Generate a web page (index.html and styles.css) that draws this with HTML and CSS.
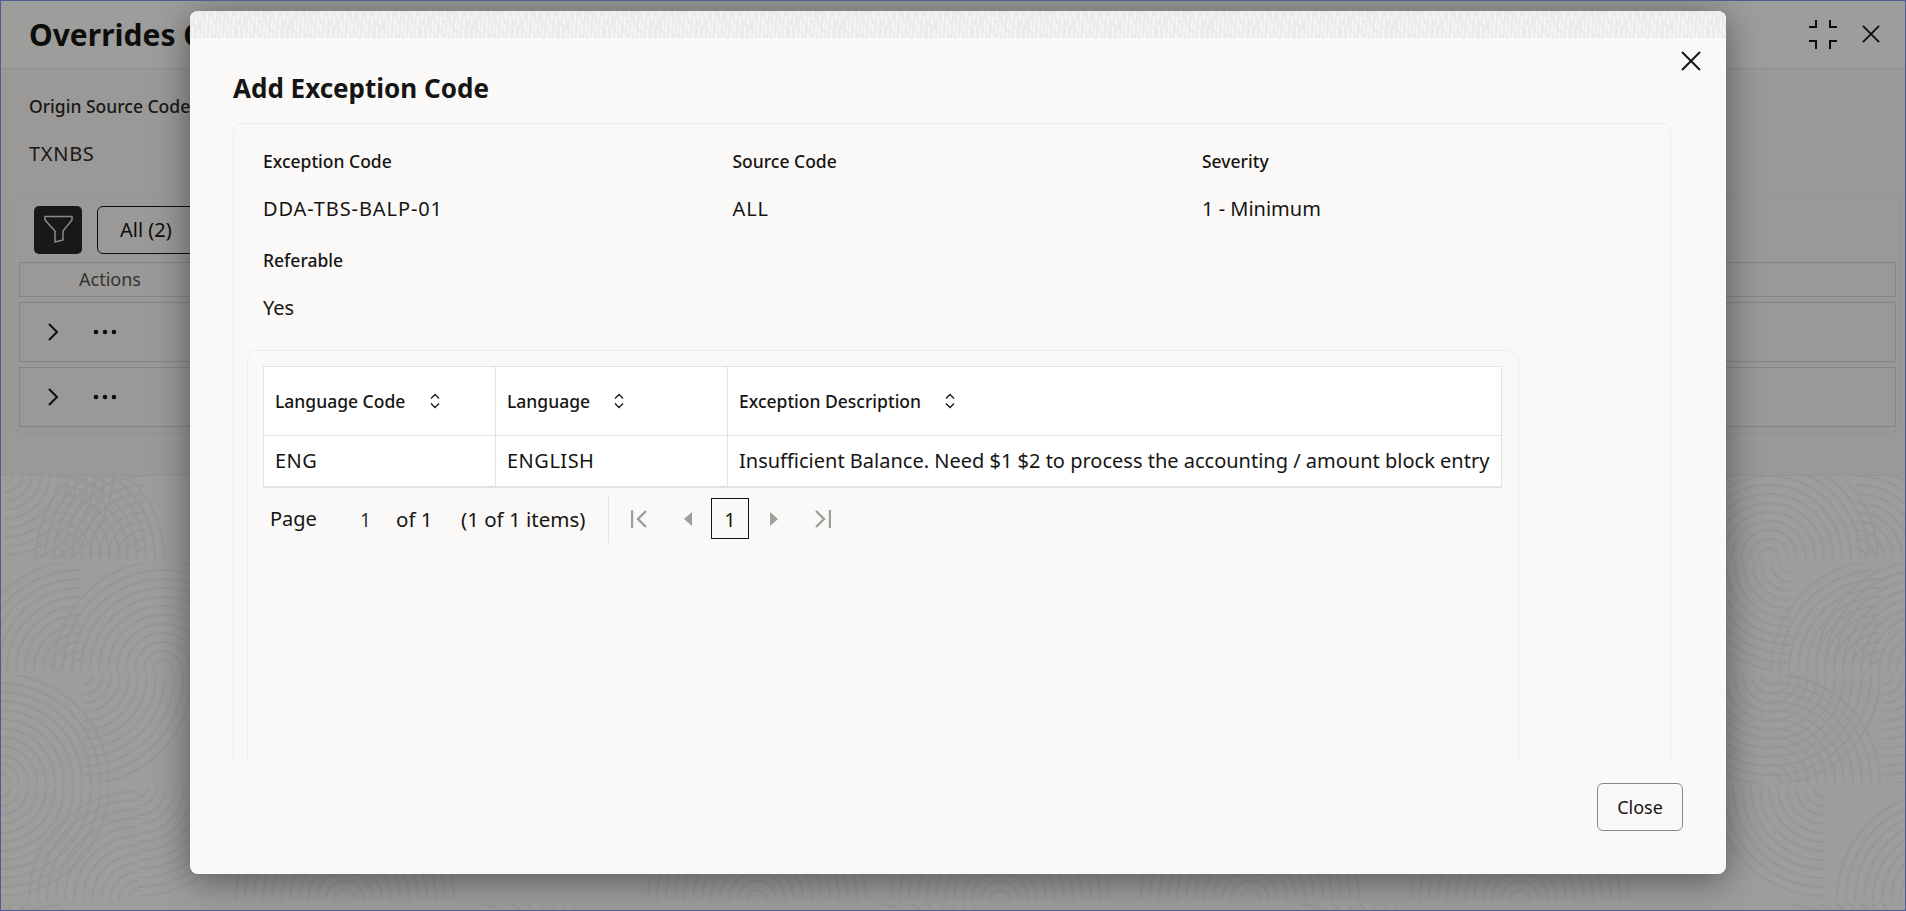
FILE: index.html
```html
<!DOCTYPE html>
<html lang="en">
<head>
<meta charset="utf-8">
<title>Add Exception Code</title>
<link rel="stylesheet" href="styles.css">
</head>
<body>
<div class="window">
  <svg class="texture" viewBox="0 0 1906 911" aria-hidden="true">
    <defs>
      <g id="q">
        <path d="M10 0A10 10 0 0 1 0 10M19 0A19 19 0 0 1 0 19M28 0A28 28 0 0 1 0 28M37 0A37 37 0 0 1 0 37M46 0A46 46 0 0 1 0 46M55 0A55 55 0 0 1 0 55M64 0A64 64 0 0 1 0 64M73 0A73 73 0 0 1 0 73M82 0A82 82 0 0 1 0 82M91 0A91 91 0 0 1 0 91M100 0A100 100 0 0 1 0 100M109 0A109 109 0 0 1 0 109"/>
      </g>
      <clipPath id="r1"><rect x="0" y="476" width="1906" height="83"/></clipPath>
      <clipPath id="r2"><rect x="0" y="563" width="1906" height="108"/></clipPath>
      <clipPath id="r3"><rect x="0" y="675" width="1906" height="108"/></clipPath>
      <clipPath id="r4"><rect x="0" y="787" width="1906" height="114"/></clipPath>
      <clipPath id="r5"><rect x="0" y="904" width="1906" height="7"/></clipPath>
    </defs>
    <g clip-path="url(#r1)">
      <use href="#q" transform="translate(4 473)"/>
      <use href="#q" transform="translate(55 558) rotate(270)"/>
      <use href="#q" transform="translate(145 558) rotate(180)"/>
      <use href="#q" transform="translate(1769 558) rotate(270)"/>
      <use href="#q" transform="translate(1769 558) rotate(180)"/>
      <use href="#q" transform="translate(1856 558) rotate(270)"/>
    </g>
    <g clip-path="url(#r2)">
      <use href="#q" transform="translate(80 670) rotate(180)"/>
      <use href="#q" transform="translate(163 670) rotate(180)"/>
      <use href="#q" transform="translate(163 670) rotate(270)"/>
      <use href="#q" transform="translate(1790 563) rotate(90)"/>
      <use href="#q" transform="translate(1880 670) rotate(180)"/>
      <use href="#q" transform="translate(1925 670) rotate(180)"/>
    </g>
    <g clip-path="url(#r3)">
      <use href="#q" transform="translate(0 783) rotate(270)"/>
      <use href="#q" transform="translate(83 675)"/>
      <use href="#q" transform="translate(1771 675) rotate(90)"/>
      <use href="#q" transform="translate(1771 675)"/>
      <use href="#q" transform="translate(1771 783) rotate(270)"/>
      <use href="#q" transform="translate(1883 675)"/>
    </g>
    <g clip-path="url(#r4)">
      <use href="#q" transform="translate(0 787)"/>
      <use href="#q" transform="translate(138 900) rotate(180)"/>
      <use href="#q" transform="translate(138 787)"/>
      <use href="#q" transform="translate(1824 787) rotate(90)"/>
      <use href="#q" transform="translate(1946 900) rotate(180)"/>
      <use href="#q" transform="translate(345 900) rotate(180)"/>
      <use href="#q" transform="translate(345 900) rotate(270)"/>
      <use href="#q" transform="translate(757 900) rotate(180)"/>
      <use href="#q" transform="translate(757 900) rotate(270)"/>
      <use href="#q" transform="translate(1000 900) rotate(180)"/>
      <use href="#q" transform="translate(1000 900) rotate(270)"/>
      <use href="#q" transform="translate(1250 900) rotate(180)"/>
      <use href="#q" transform="translate(1250 900) rotate(270)"/>
      <use href="#q" transform="translate(1520 900) rotate(180)"/>
      <use href="#q" transform="translate(1520 900) rotate(270)"/>
    </g>
    <g clip-path="url(#r5)">
      <use href="#q" transform="translate(60 960) rotate(180)"/>
      <use href="#q" transform="translate(480 960) rotate(270)"/>
      <use href="#q" transform="translate(880 960) rotate(270)"/>
      <use href="#q" transform="translate(1300 960) rotate(270)"/>
      <use href="#q" transform="translate(1790 960) rotate(270)"/>
    </g>
  </svg>

  <header class="page-head">
    <h1 class="page-title">Overrides Code</h1>
    <div class="head-tools">
      <svg class="icon-collapse" viewBox="0 0 30 30" aria-hidden="true"><path d="M1 8H8V1M22 1V8H29M1 22H8V30M29 22H22V30"/></svg>
      <svg class="icon-x" viewBox="0 0 20 20" aria-hidden="true"><path d="M1 1L19 19M19 1L1 19"/></svg>
    </div>
  </header>

  <main class="page-main">
    <div class="origin">
      <div class="origin-label">Origin Source Code</div>
      <div class="origin-value">TXNBS</div>
    </div>
    <section class="list">
      <div class="list-tools">
        <button class="filter-btn" aria-label="Filter">
          <svg viewBox="0 0 48 48" aria-hidden="true"><path d="M11 10.500H38V14L29 25V34L21 36V25L11 14Z"/></svg>
        </button>
        <button class="all-btn">All (2)</button>
      </div>
      <div class="list-head"><span>Actions</span></div>
      <div class="list-row">
        <svg class="chev" viewBox="0 0 12 20" aria-hidden="true"><path d="M2 2L10 10L2 18"/></svg>
        <svg class="dots" viewBox="0 0 24 6" aria-hidden="true"><circle cx="3" cy="3" r="2.300"/><circle cx="12" cy="3" r="2.300"/><circle cx="21" cy="3" r="2.300"/></svg>
      </div>
      <div class="list-row">
        <svg class="chev" viewBox="0 0 12 20" aria-hidden="true"><path d="M2 2L10 10L2 18"/></svg>
        <svg class="dots" viewBox="0 0 24 6" aria-hidden="true"><circle cx="3" cy="3" r="2.300"/><circle cx="12" cy="3" r="2.300"/><circle cx="21" cy="3" r="2.300"/></svg>
      </div>
    </section>
  </main>

  <div class="overlay"></div>

  <div class="dialog" role="dialog" aria-label="Add Exception Code">
    <svg class="dialog-band" aria-hidden="true">
      <defs>
        <pattern id="band" width="46" height="27" patternUnits="userSpaceOnUse">
          <path d="M2 1v9M6 4v11M10 0v7M13 8v12M17 2v10M21 6v13M25 1v8M28 11v11M32 3v9M36 7v12M40 0v10M44 5v11M3 15v11M8 18v8M12 22v5M16 14v10M20 21v6M24 12v11M27 24v3M31 15v10M35 21v6M39 13v11M43 18v9" />
        </pattern>
      </defs>
      <rect width="100%" height="100%" fill="url(#band)"/>
    </svg>
    <button class="dialog-x" aria-label="Close">
      <svg viewBox="0 0 20 20" aria-hidden="true"><path d="M1 1L19 19M19 1L1 19"/></svg>
    </button>
    <h2 class="dialog-title">Add Exception Code</h2>
    <div class="dialog-scroll">
      <section class="panel">
        <div class="fields">
          <div class="field"><div class="field-label">Exception Code</div><div class="field-value caps">DDA-TBS-BALP-01</div></div>
          <div class="field"><div class="field-label">Source Code</div><div class="field-value caps">ALL</div></div>
          <div class="field"><div class="field-label">Severity</div><div class="field-value">1 - Minimum</div></div>
          <div class="field"><div class="field-label">Referable</div><div class="field-value">Yes</div></div>
        </div>
        <div class="inner">
          <table class="grid">
            <colgroup><col class="col-a"><col class="col-b"><col></colgroup>
            <thead>
              <tr>
                <th><span class="th-in"><span class="th-a">Language Code</span><svg class="sort" viewBox="0 0 10 16" aria-hidden="true"><path d="M1 5.500L5 1.500L9 5.500M1 10.500L5 14.500L9 10.500"/></svg></span></th>
                <th><span class="th-in"><span class="th-b">Language</span><svg class="sort" viewBox="0 0 10 16" aria-hidden="true"><path d="M1 5.500L5 1.500L9 5.500M1 10.500L5 14.500L9 10.500"/></svg></span></th>
                <th><span class="th-in"><span class="th-c">Exception Description</span><svg class="sort" viewBox="0 0 10 16" aria-hidden="true"><path d="M1 5.500L5 1.500L9 5.500M1 10.500L5 14.500L9 10.500"/></svg></span></th>
              </tr>
            </thead>
            <tbody>
              <tr><td class="cell-caps">ENG</td><td class="cell-caps">ENGLISH</td><td>Insufficient Balance. Need $1 $2 to process the accounting / amount block entry</td></tr>
            </tbody>
          </table>
          <div class="pager">
            <span class="pg-page">Page</span>
            <span class="pg-num">1</span>
            <span class="pg-of">of 1</span>
            <span class="pg-items">(1 of 1 items)</span>
            <span class="pg-sep"></span>
            <svg class="pg-first" viewBox="0 0 16 18" aria-hidden="true"><path d="M1 0V18M15 1L7 9L15 17"/></svg>
            <svg class="pg-prev" viewBox="0 0 9 14" aria-hidden="true"><path d="M9 0V14L1 7Z"/></svg>
            <span class="pg-cur">1</span>
            <svg class="pg-next" viewBox="0 0 9 14" aria-hidden="true"><path d="M0 0V14L8 7Z"/></svg>
            <svg class="pg-last" viewBox="0 0 16 18" aria-hidden="true"><path d="M15 0V18M1 1L9 9L1 17"/></svg>
          </div>
        </div>
      </section>
    </div>
    <footer class="dialog-foot"><button class="close-btn">Close</button></footer>
  </div>
</div>
</body>
</html>
```
FILE: styles.css
```css
* { box-sizing: border-box; }
html, body { margin: 0; height: 100%; overflow: hidden; }
body { font-family: "Noto Sans", "Open Sans", sans-serif; color: #161513; }
button { font-family: inherit; }

.window {
  position: relative;
  width: 1906px;
  height: 911px;
  background: #fdfdfc;
  overflow: hidden;
}
.window::after {
  content: "";
  position: absolute;
  inset: 0;
  border: 1px solid #4f5c96;
  pointer-events: none;
}

.texture { position: absolute; left: 0; top: 0; width: 1906px; height: 911px; }
.texture use { fill: none; stroke: #f4f3f2; stroke-width: 2; }

.page-head {
  position: relative;
  height: 69px;
  padding: 0 26px 0 29px;
  display: flex;
  align-items: center;
  justify-content: space-between;
  background: #fdfdfc;
  border-bottom: 1px solid #ebe9e6;
}
.page-title { margin: 0; font-size: 30px; font-weight: 700; color: #161513; white-space: nowrap; }
.head-tools { display: flex; align-items: center; gap: 24px; }
.icon-collapse { width: 30px; height: 30px; fill: none; stroke: #161513; stroke-width: 2; }
.icon-x { width: 18px; height: 18px; fill: none; stroke: #161513; stroke-width: 2; }

.page-main {
  position: relative;
  height: 407px;
  padding: 25px 6px 0 13px;
  background: #f9f7f4;
  border-bottom: 1px solid #efedea;
}
.origin { padding-left: 16px; }
.origin-label { font-size: 17.500px; line-height: 24px; font-weight: 500; color: #2b2a28; }
.origin-value { margin-top: 24px; font-size: 20px; line-height: 24px; letter-spacing: 0.700px; color: #2b2a28; }

.list {
  margin-top: 31px;
  height: 236px;
  padding: 8px 3px 0 5px;
  border: 1px solid #f0eeeb;
  border-radius: 8px;
}
.list-tools { display: flex; gap: 15px; padding-left: 15px; }
.filter-btn {
  width: 48px;
  height: 48px;
  padding: 0;
  background: #2b2725;
  border: 0;
  border-radius: 5px;
}
.filter-btn svg { display: block; width: 48px; height: 48px; fill: none; stroke: #e0dedb; stroke-width: 1.500; }
.all-btn {
  width: 120px;
  height: 48px;
  padding: 0 0 2px 22px;
  text-align: left;
  font-size: 20px;
  color: #161513;
  background: transparent;
  border: 1px solid #161513;
  border-radius: 6px;
}
.list-head {
  margin-top: 8px;
  height: 35px;
  padding-left: 59px;
  line-height: 33px;
  font-size: 18px;
  color: #55534f;
  border: 1px solid #d9d7d4;
}
.list-row {
  margin-top: 5px;
  height: 60px;
  padding-left: 27px;
  display: flex;
  align-items: center;
  gap: 34px;
  border: 1px solid #d9d7d4;
}
.chev { width: 12px; height: 20px; fill: none; stroke: #161513; stroke-width: 2; }
.dots { width: 24px; height: 6px; fill: #161513; }

.overlay { position: absolute; inset: 0; background: rgba(0, 0, 0, 0.38); }

.dialog {
  position: absolute;
  left: 190px;
  top: 11px;
  width: 1536px;
  height: 863px;
  background: #fbf9f8;
  border-radius: 8px;
  box-shadow: 0 6px 36px rgba(0, 0, 0, 0.45);
  overflow: hidden;
}
.dialog-band { display: block; width: 100%; height: 27px; background: #ecebe9; }
.dialog-band path { fill: none; stroke: #f8f8f7; stroke-width: 1.500; }
.dialog-x {
  position: absolute;
  right: 25px;
  top: 40px;
  width: 20px;
  height: 20px;
  padding: 0;
  background: none;
  border: 0;
}
.dialog-x svg { display: block; width: 20px; height: 20px; fill: none; stroke: #161513; stroke-width: 2; }
.dialog-title {
  margin: 0;
  padding: 31px 0 0 43px;
  height: 85px;
  font-size: 26px;
  line-height: 38px;
  font-weight: 700;
  color: #161513;
}
.dialog-scroll { height: 639px; margin-left: 43px; overflow: hidden; }
.panel {
  width: 1438px;
  height: 900px;
  padding: 25px 0 0 29px;
  border: 1px solid #f0eeeb;
  border-radius: 8px;
}
.fields { display: grid; grid-template-columns: repeat(3, 469.500px); }
.field { height: 99px; }
.field-label { font-size: 17.500px; line-height: 24px; font-weight: 500; }
.field-value { margin-top: 24px; font-size: 20px; line-height: 24px; }
.caps { letter-spacing: 0.900px; }
.inner {
  width: 1272px;
  height: 700px;
  margin: 3px 0 0 -16px;
  padding: 15px 15px 0;
  border: 1px solid #f0eeeb;
  border-radius: 10px;
}
.grid { width: 1239px; border-collapse: collapse; table-layout: fixed; background: #fff; }
.col-a { width: 232px; }
.col-b { width: 232px; }
.grid th, .grid td { border: 1px solid #e3e2e0; padding: 0 0 0 11px; text-align: left; white-space: nowrap; }
.grid th { height: 69px; font-size: 17.500px; font-weight: 500; }
.grid td { height: 51px; font-size: 20px; border-bottom-width: 2px; }
.grid .cell-caps { letter-spacing: 0.500px; }
.th-in { display: flex; align-items: center; }
.th-a { width: 155px; }
.th-b { width: 107px; }
.th-c { width: 206px; }
.sort { width: 10px; height: 16px; fill: none; stroke: #161513; stroke-width: 1.300; }

.pager { display: flex; align-items: center; height: 48px; margin-top: 7px; font-size: 20px; }
.pg-page { margin-left: 7px; width: 90px; }
.pg-num { width: 36px; font-size: 19px; color: #35332f; padding-top: 3px; }
.pg-of { width: 65px; font-size: 20.500px; }
.pg-items { width: 147px; font-size: 20.500px; white-space: nowrap; }
.pg-sep { width: 1px; height: 48px; background: #e3e2e0; margin-right: 22px; }
.pg-first { width: 16px; height: 18px; margin-right: 36px; fill: none; stroke: #a09e9a; stroke-width: 2.400; }
.pg-prev { width: 9px; height: 14px; margin-right: 19px; fill: #a09e9a; }
.pg-cur {
  width: 38px;
  height: 41px;
  margin-right: 21px;
  border: 1px solid #161513;
  text-align: center;
  line-height: 41px;
}
.pg-next { width: 9px; height: 14px; margin-right: 36px; fill: #a09e9a; }
.pg-last { width: 16px; height: 18px; fill: none; stroke: #a09e9a; stroke-width: 2.400; }

.dialog-foot { position: absolute; left: 0; right: 0; top: 772px; display: flex; justify-content: flex-end; padding-right: 43px; }
.close-btn {
  width: 86px;
  height: 48px;
  padding: 0;
  font-size: 18px;
  color: #161513;
  background: transparent;
  border: 1px solid #8a8986;
  border-radius: 6px;
}
```
